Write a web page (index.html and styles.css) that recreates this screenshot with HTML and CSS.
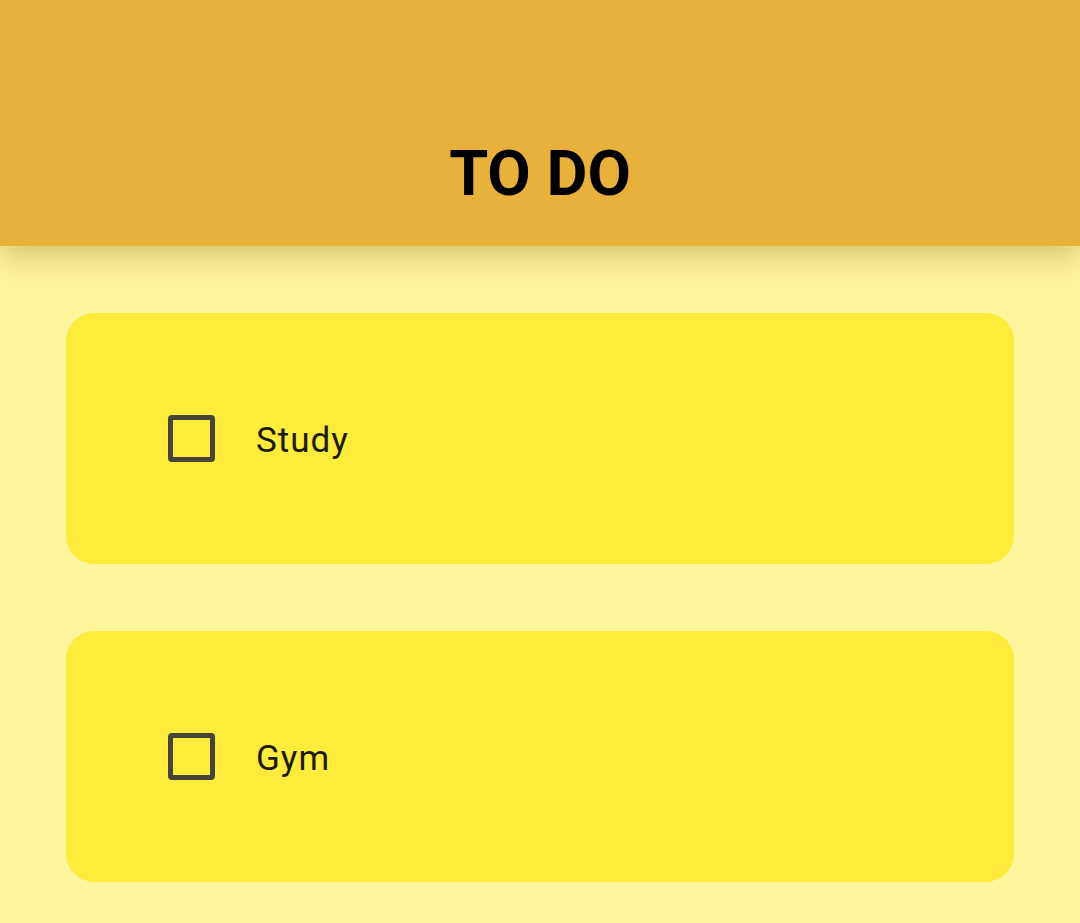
FILE: index.html
```html
<!DOCTYPE html>
<html>
<head>
<meta charset="utf-8">
<link rel="stylesheet" href="styles.css">
</head>
<body>
<header class="header"><h1 class="title">TO DO</h1></header>
<main class="list">
  <div class="card"><span class="box"></span><span class="label">Study</span></div>
  <div class="card"><span class="box"></span><span class="label">Gym</span></div>
</main>
</body>
</html>
```
FILE: styles.css
```css
html, body {
  margin: 0;
  padding: 0;
  background: #FFF59D;
  font-family: Roboto, "Noto Sans", sans-serif;
  height: 100%;
  overflow: hidden;
}
.header {
  position: relative;
  z-index: 1;
  height: 246px;
  background: #E8B13C;
  box-shadow: 0 10px 26px rgba(90, 70, 0, 0.28);
  display: flex;
  align-items: flex-end;
  justify-content: center;
  box-sizing: border-box;
  padding-bottom: 41px;
}
.title {
  margin: 0;
  font-size: 63px;
  font-weight: 700;
  line-height: 1;
  color: #000;
}
.list {
  padding: 67px 66px 0;
  display: flex;
  flex-direction: column;
  gap: 67px;
}
.card {
  height: 251px;
  background: #FFEB3B;
  border-radius: 28px;
  display: flex;
  align-items: center;
  padding-left: 102px;
  gap: 41px;
}
.box {
  width: 47px;
  height: 47px;
  box-sizing: border-box;
  border: 5px solid #474537;
  border-radius: 4px;
  flex: none;
}
.label {
  font-size: 35px;
  letter-spacing: 1px;
  color: #1c1b14;
  position: relative;
  top: 2px;
}
```
